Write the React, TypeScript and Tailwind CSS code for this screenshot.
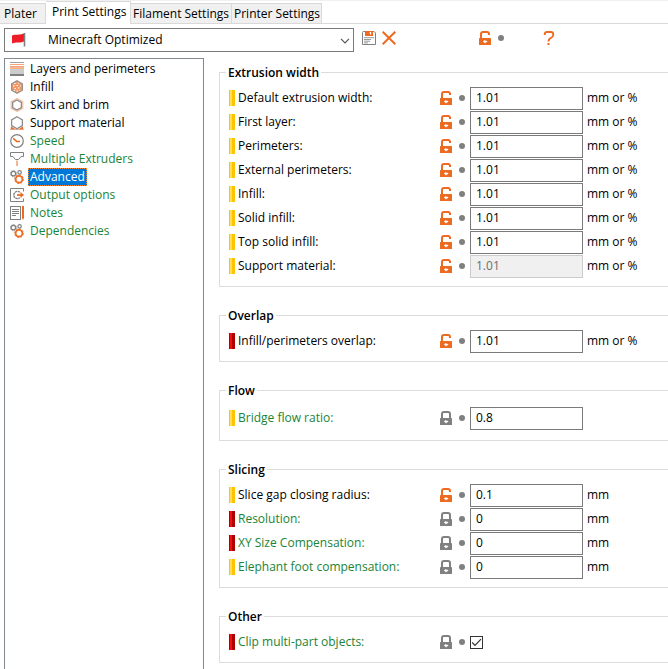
import { useState, type ReactNode } from "react";

const ORANGE = "#ed6b21";
const GREY = "#808080";

type Mode = "advanced" | "expert";

interface Option {
  id: string;
  label: string;
  value: string;
  unit?: string;
  mode: Mode;
  system?: boolean;
  disabled?: boolean;
  checkbox?: boolean;
}

interface Group {
  title: string;
  roomy?: boolean;
  options: Option[];
}

const groups: Group[] = [
  {
    title: "Extrusion width",
    options: [
      { id: "default-width", label: "Default extrusion width:", value: "1.01", unit: "mm or %", mode: "advanced" },
      { id: "first-layer", label: "First layer:", value: "1.01", unit: "mm or %", mode: "advanced" },
      { id: "perimeters", label: "Perimeters:", value: "1.01", unit: "mm or %", mode: "advanced" },
      { id: "external", label: "External perimeters:", value: "1.01", unit: "mm or %", mode: "advanced" },
      { id: "infill", label: "Infill:", value: "1.01", unit: "mm or %", mode: "advanced" },
      { id: "solid-infill", label: "Solid infill:", value: "1.01", unit: "mm or %", mode: "advanced" },
      { id: "top-solid", label: "Top solid infill:", value: "1.01", unit: "mm or %", mode: "advanced" },
      { id: "support", label: "Support material:", value: "1.01", unit: "mm or %", mode: "advanced", disabled: true },
    ],
  },
  {
    title: "Overlap",
    options: [{ id: "overlap", label: "Infill/perimeters overlap:", value: "1.01", unit: "mm or %", mode: "expert" }],
  },
  {
    title: "Flow",
    roomy: true,
    options: [{ id: "bridge", label: "Bridge flow ratio:", value: "0.8", mode: "advanced", system: true }],
  },
  {
    title: "Slicing",
    options: [
      { id: "gap", label: "Slice gap closing radius:", value: "0.1", unit: "mm", mode: "advanced" },
      { id: "resolution", label: "Resolution:", value: "0", unit: "mm", mode: "expert", system: true },
      { id: "xy", label: "XY Size Compensation:", value: "0", unit: "mm", mode: "expert", system: true },
      { id: "elephant", label: "Elephant foot compensation:", value: "0", unit: "mm", mode: "advanced", system: true },
    ],
  },
  {
    title: "Other",
    options: [{ id: "clip", label: "Clip multi-part objects:", value: "", mode: "expert", system: true, checkbox: true }],
  },
];

function Icon({ children }: { children: ReactNode }) {
  return (
    <svg width="14" height="14" viewBox="0 0 14 14" fill="none" className="block shrink-0" aria-hidden="true">
      {children}
    </svg>
  );
}

function Lock({ locked }: { locked: boolean }) {
  return (
    <svg width="12" height="14" viewBox="0 0 12 14" fill="none" className="block" aria-hidden="true">
      <path
        d={locked ? "M2 8V3Q2 1 4 1H8Q10 1 10 3V8" : "M2 8V3Q2 1 4 1H8Q10 1 10 3V4"}
        stroke={locked ? GREY : ORANGE}
        strokeWidth="2"
      />
      <rect y="7" width="12" height="7" rx="0.5" fill={locked ? GREY : ORANGE} />
      <path d="M4 10.5L6 9.2V10H8V11H6.6V12H5.6V11.5Z" fill="#fff" stroke="#fff" strokeWidth=".4" />
    </svg>
  );
}

function LayersIcon() {
  return (
    <Icon>
      <path d="M0 .5H14" stroke="#a0a0a0" />
      <path d="M0 2.5H14M0 4.5H14" stroke="#f5a678" />
      <path d="M0 6H14" stroke={ORANGE} />
      <path d="M0 8H14M0 10H14" stroke="#999" />
      <path d="M0 12.8H14" stroke={GREY} strokeWidth="2.4" />
    </Icon>
  );
}

const HEX = "M7 .8L12.4 3.9V10.1L7 13.2L1.6 10.1V3.9Z";

function InfillIcon() {
  return (
    <Icon>
      <path d={HEX} fill="#f39a68" />
      <path
        d="M4 3.5H5.5M8 3H9.5M3 6H4.5M6.5 5.5H8M10 6H11M4.5 8.5H6M8 8H9.5M3.5 10.5H5M6.5 11H8M9.5 10.5H10.5"
        stroke="#fff"
        strokeWidth="1.2"
      />
      <path d={HEX} stroke="#969088" strokeWidth="1.2" />
    </Icon>
  );
}

function SkirtIcon() {
  return (
    <Icon>
      <path d="M7 .6L12.8 3.7V10.3L7 13.4L1.2 10.3V3.7Z" stroke="#f6bb99" strokeWidth="1.1" />
      <path d="M7 2L11.4 4.5V9.5L7 12L2.6 9.5V4.5Z" stroke="#8c8c8c" strokeWidth="1.3" />
    </Icon>
  );
}

function SupportIcon() {
  return (
    <Icon>
      <path d="M1 10.5L4.5 12.6V14H.5ZM13 10.5L9.5 12.6V14H13.5Z" fill={ORANGE} />
      <path d="M.5 13.4H13.5" stroke="#f3a27a" />
      <path d="M7 .8L12.4 3.9V9.6L7 12.7L1.6 9.6V3.9Z" fill="#fff" stroke="#8c8c8c" strokeWidth="1.3" />
    </Icon>
  );
}

function SpeedIcon() {
  return (
    <Icon>
      <circle cx="7" cy="7" r="6.3" stroke={GREY} strokeWidth="1.2" />
      <path d="M3.2 4.4L6.7 7.4H10" stroke={ORANGE} strokeWidth="1.5" />
    </Icon>
  );
}

function ExtruderIcon() {
  return (
    <Icon>
      <path d="M.5 .5H13.5V4.5H11L8.6 7.5H5.4L3 4.5H.5Z" stroke={GREY} />
      <path d="M7 8.5V14" stroke="#f3a27a" strokeWidth="1.6" />
    </Icon>
  );
}

function GearsIcon() {
  return (
    <Icon>
      <circle cx="3.4" cy="3.6" r="2.3" stroke={GREY} strokeWidth="1.3" />
      <circle cx="3.4" cy="3.6" r="3.1" stroke={GREY} strokeWidth=".8" strokeDasharray="1.2 1.2" />
      <circle cx="9.6" cy="2.4" r="1.7" stroke={GREY} strokeWidth="1.2" />
      <circle cx="9" cy="9.2" r="3.4" stroke={ORANGE} strokeWidth="1.8" />
      <circle cx="9" cy="9.2" r="4.4" stroke={ORANGE} strokeWidth=".9" strokeDasharray="1.7 1.7" />
    </Icon>
  );
}

function OutputIcon() {
  return (
    <Icon>
      <path d="M13.5 3.5V.5H.5V13.5H13.5V10.5" stroke={GREY} />
      <path d="M9.8 4.3A3.6 3.6 0 1 0 9.8 9.7" stroke={GREY} strokeWidth="1.4" strokeDasharray="2.4 .5" />
      <path d="M7 7H12" stroke={ORANGE} strokeWidth="1.8" />
      <path d="M10.5 4L14 7L10.5 10Z" fill={ORANGE} />
    </Icon>
  );
}

function NotesIcon() {
  return (
    <Icon>
      <rect x=".5" y=".5" width="10" height="13" stroke={GREY} />
      <path d="M2 3.5H9M2 5.5H9M2 7.5H9M2 9.5H6" stroke={GREY} />
      <path d="M12 0H14V12L13 14L12 12Z" fill={ORANGE} />
    </Icon>
  );
}

function SaveIcon() {
  return (
    <Icon>
      <path d="M.5 1.5Q.5 .5 1.5 .5H12L13.5 2V13.5H.5Z" stroke={GREY} />
      <path d="M3 0H11V5H3Z" fill={ORANGE} />
      <path d="M8.5 1V3.5" stroke="#fff" strokeWidth="1.4" />
      <path d="M2 6.7H12M2 8.5H9M2 10.2H8M2 11.9H6" stroke="#999" />
    </Icon>
  );
}

function Flag() {
  return (
    <svg width="15" height="14" viewBox="0 0 15 14" className="block" aria-hidden="true">
      <path d="M1 2.5C5 1 8 2.5 13 .5V8.5C8 10.5 5 8.5 1 10.5Z" fill="#ee1c25" />
      <path d="M13.5 0V13.5" stroke={GREY} strokeWidth="1.6" />
    </svg>
  );
}

const pages = [
  { name: "Layers and perimeters", icon: <LayersIcon />, system: false },
  { name: "Infill", icon: <InfillIcon />, system: false },
  { name: "Skirt and brim", icon: <SkirtIcon />, system: false },
  { name: "Support material", icon: <SupportIcon />, system: false },
  { name: "Speed", icon: <SpeedIcon />, system: true },
  { name: "Multiple Extruders", icon: <ExtruderIcon />, system: true },
  { name: "Advanced", icon: <GearsIcon />, system: true },
  { name: "Output options", icon: <OutputIcon />, system: true },
  { name: "Notes", icon: <NotesIcon />, system: true },
  { name: "Dependencies", icon: <GearsIcon />, system: true },
];

function Tabs() {
  const inactive = "h-[20px] border-t border-r border-[#d9d9d9] bg-[#f0f0f0] pt-px text-left whitespace-nowrap";
  return (
    <nav className="flex h-[24px] items-end border-t border-b border-t-[#f0f0f0] border-b-[#d9d9d9]">
      <button className={`${inactive} w-[46px] pl-[4px]`}>Plater</button>
      <button className="-mb-px h-[23px] w-[85px] border-t border-r border-[#d9d9d9] bg-white pb-[3px] pl-[6px] text-left whitespace-nowrap">
        Print Settings
      </button>
      <button className={`${inactive} w-[101px] pl-[2px]`}>Filament Settings</button>
      <button className={`${inactive} w-[90px] pl-[2px]`}>Printer Settings</button>
    </nav>
  );
}

function Toolbar() {
  return (
    <div className="flex h-[34px] items-start pt-[4px] pl-[4px]">
      <div className="relative w-[350px]">
        <select
          aria-label="Print preset"
          className="block h-[24px] w-full appearance-none border border-[#7a7a7a] bg-white pl-[43px] text-black outline-none"
        >
          <option>Minecraft Optimized</option>
        </select>
        <span className="pointer-events-none absolute top-[5px] left-[7px]">
          <Flag />
        </span>
        <svg width="10" height="6" viewBox="0 0 10 6" fill="none" className="pointer-events-none absolute top-[10px] right-[4px]" aria-hidden="true">
          <path d="M1 .8L5 4.8L9 .8" stroke="#555" strokeWidth="1.2" />
        </svg>
      </div>
      <button aria-label="Save preset" className="ml-[8px] flex h-[20px] items-center">
        <SaveIcon />
      </button>
      <button aria-label="Delete preset" className="ml-[6px] flex h-[20px] items-center">
        <Icon>
          <path d="M.7 .7L13.3 13.3M13.3 .7L.7 13.3" stroke={ORANGE} strokeWidth="2" />
        </Icon>
      </button>
      <button aria-label="Reset to system values" className="ml-[83px] flex h-[20px] items-center">
        <Lock locked={false} />
      </button>
      <button aria-label="Reset to saved values" className="ml-[7px] flex h-[20px] items-center">
        <span className="block size-[6px] rounded-full bg-[#808080]" />
      </button>
      <button aria-label="Help" className="ml-[39px] flex h-[20px] items-center">
        <svg width="12" height="14" viewBox="0 0 12 14" fill="none" className="block" aria-hidden="true">
          <path d="M1.8 4V3Q1.8 1 4 1H8Q10.2 1 10.2 3V4Q10.2 5.5 8.5 6.5Q5.5 8 5.5 10.5" stroke={ORANGE} strokeWidth="1.9" />
          <path d="M4.5 12H6.5V14H4.5Z" fill={ORANGE} />
        </svg>
      </button>
    </div>
  );
}

function PageTree() {
  const [current, setCurrent] = useState("Advanced");
  return (
    <ul className="ml-[4px] w-[200px] shrink-0 border border-b-0 border-[#828790] pt-px pl-[5px]">
      {pages.map((page) => (
        <li key={page.name} className="flex h-[18px] items-center gap-[4px]">
          {page.icon}
          <button
            onClick={() => setCurrent(page.name)}
            className={`h-[18px] border border-dotted px-px leading-[16px] ${
              page.name === current
                ? "border-[#ff8728] bg-[#0078d7] text-white outline-none"
                : page.system
                  ? "border-transparent text-[#1a8436]"
                  : "border-transparent text-black"
            }`}
          >
            {page.name}
          </button>
        </li>
      ))}
    </ul>
  );
}

function OptionRow({ option }: { option: Option }) {
  const [checked, setChecked] = useState(true);
  const advanced = option.mode === "advanced";
  return (
    <div className="flex h-[24px] items-start">
      <span className={`mt-[3px] flex h-[16px] w-[6px] shrink-0 pl-px ${advanced ? "bg-[#ffc400]" : "bg-[#b00000]"}`}>
        <span className={`h-full w-[2px] ${advanced ? "bg-[#ffdc5c]" : "bg-[#ee1111]"}`} />
      </span>
      <label
        htmlFor={option.id}
        className={`mt-[3px] ml-[3px] w-[202px] shrink-0 whitespace-nowrap ${option.system ? "text-[#1a8436]" : "text-black"}`}
      >
        {option.label}
      </label>
      <button aria-label="Reset to system value" className="mt-[4px] shrink-0">
        <Lock locked={!!option.system} />
      </button>
      <button aria-label="Reset to saved value" className="mt-[8px] ml-[7px] shrink-0">
        <span className="block size-[6px] rounded-full bg-[#808080]" />
      </button>
      {option.checkbox ? (
        <span className="relative mt-[5px] ml-[5px] size-[13px]">
          <input
            id={option.id}
            type="checkbox"
            checked={checked}
            onChange={(e) => setChecked(e.target.checked)}
            className="block size-[13px] appearance-none border border-[#333] bg-white"
          />
          {checked && (
            <svg width="13" height="13" viewBox="0 0 13 13" fill="none" className="pointer-events-none absolute inset-0" aria-hidden="true">
              <path d="M2.2 6.5L5 9.3L11 3.2" stroke="#333" strokeWidth="1.2" />
            </svg>
          )}
        </span>
      ) : (
        <input
          id={option.id}
          type="text"
          defaultValue={option.value}
          disabled={option.disabled}
          className="ml-[5px] h-[23px] w-[113px] shrink-0 border border-[#7a7a7a] bg-white pb-[2px] pl-[5px] text-black outline-none disabled:border-[#ccc] disabled:bg-[#f0f0f0] disabled:text-[#6d6d6d]"
        />
      )}
      {option.unit && <span className="mt-[3px] ml-[4px] whitespace-nowrap">{option.unit}</span>}
    </div>
  );
}

export default function App() {
  return (
    <div className="flex min-h-screen flex-col overflow-x-hidden bg-white font-['Open_Sans','Noto_Sans',sans-serif] text-[12px] leading-[16px] text-black">
      <Tabs />
      <Toolbar />
      <div className="flex flex-1">
        <PageTree />
        <main className="ml-[15px] flex min-w-0 flex-1 flex-col gap-[20px] pt-[6px]">
          {groups.map((group) => (
            <fieldset
              key={group.title}
              className={`min-w-0 border border-r-0 border-[#dcdcdc] pl-[6px] ${group.roomy ? "pt-[8px] pb-[9px]" : "pt-[6px] pb-[7px]"}`}
            >
              <legend className="h-[17px] px-[2px] leading-[17px] font-semibold">{group.title}</legend>
              <div className="pl-[3px]">
                {group.options.map((option) => (
                  <OptionRow key={option.id} option={option} />
                ))}
              </div>
            </fieldset>
          ))}
        </main>
      </div>
    </div>
  );
}
